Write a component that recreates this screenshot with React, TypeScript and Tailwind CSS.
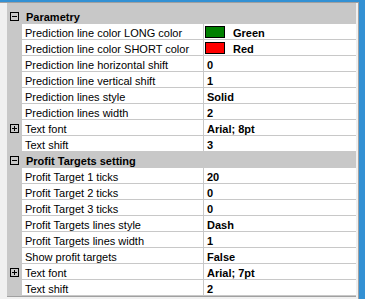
import React from "react";

type Row =
  | { kind: "header"; label: string }
  | { kind: "prop"; label: string; value: string; swatch?: string; expandable?: boolean };

const rows: Row[] = [
  { kind: "header", label: "Parametry" },
  { kind: "prop", label: "Prediction line color LONG color", value: "Green", swatch: "bg-[#008000]" },
  { kind: "prop", label: "Prediction line color SHORT color", value: "Red", swatch: "bg-[#ff0000]" },
  { kind: "prop", label: "Prediction line horizontal shift", value: "0" },
  { kind: "prop", label: "Prediction line vertical shift", value: "1" },
  { kind: "prop", label: "Prediction lines style", value: "Solid" },
  { kind: "prop", label: "Prediction lines width", value: "2" },
  { kind: "prop", label: "Text font", value: "Arial; 8pt", expandable: true },
  { kind: "prop", label: "Text shift", value: "3" },
  { kind: "header", label: "Profit Targets setting" },
  { kind: "prop", label: "Profit Target 1 ticks", value: "20" },
  { kind: "prop", label: "Profit Target 2 ticks", value: "0" },
  { kind: "prop", label: "Profit Target 3 ticks", value: "0" },
  { kind: "prop", label: "Profit Targets lines style", value: "Dash" },
  { kind: "prop", label: "Profit Targets lines width", value: "1" },
  { kind: "prop", label: "Show profit targets", value: "False" },
  { kind: "prop", label: "Text font", value: "Arial; 7pt", expandable: true },
  { kind: "prop", label: "Text shift", value: "2" },
];

// small tree-style box, minus when open, plus when collapsed
function Toggle({ open }: { open: boolean }) {
  return (
    <div className="relative w-[9px] h-[9px] border border-black bg-transparent">
      <div className="absolute left-[1px] top-[3px] w-[5px] h-px bg-black" />
      {!open && <div className="absolute left-[3px] top-[1px] w-px h-[5px] bg-black" />}
    </div>
  );
}

export default function App() {
  return (
    <div
      className="w-[365px] h-[299px] bg-[#3391d4] pt-[2px] pr-[6px] text-[11px] text-black"
      style={{ fontFamily: '"Liberation Sans", Arial, sans-serif' }}
    >
      <div className="bg-[#f0f0f0] h-[297px] border-t border-r border-[#a0a0a0] pl-[7px] pr-[2px] pb-[2px]">
        <div className="bg-[#c8c8c8] pt-[5px] border-b border-[#a0a0a0]">
          {rows.map((r, i) =>
            r.kind === "header" ? (
              <div key={i} className="flex h-4">
                <div className="w-[15px] shrink-0 pl-[3px] pt-[4px]">
                  <Toggle open />
                </div>
                <div className="pl-[4px] pt-px leading-[16px] font-bold">{r.label}</div>
              </div>
            ) : (
              <div key={i} className="flex h-4">
                <div className="w-[15px] shrink-0 pl-[3px] pt-[4px]">
                  {r.expandable && <Toggle open={false} />}
                </div>
                <div className="w-[182px] shrink-0 bg-white border-b border-r border-[#c8c8c8] pl-[3px] pt-px leading-[16px] whitespace-nowrap overflow-hidden">
                  {r.label}
                </div>
                <div className="flex-1 bg-white border-b border-[#c8c8c8] flex items-start overflow-hidden whitespace-nowrap font-bold">
                  {r.swatch ? (
                    <>
                      <div className={`ml-px mt-[2px] w-[20px] h-[12px] border border-black ${r.swatch}`} />
                      <span className="ml-[8px] pt-px leading-[16px]">{r.value}</span>
                    </>
                  ) : (
                    <span className="pl-[3px] pt-px leading-[16px]">{r.value}</span>
                  )}
                </div>
              </div>
            )
          )}
        </div>
      </div>
    </div>
  );
}
